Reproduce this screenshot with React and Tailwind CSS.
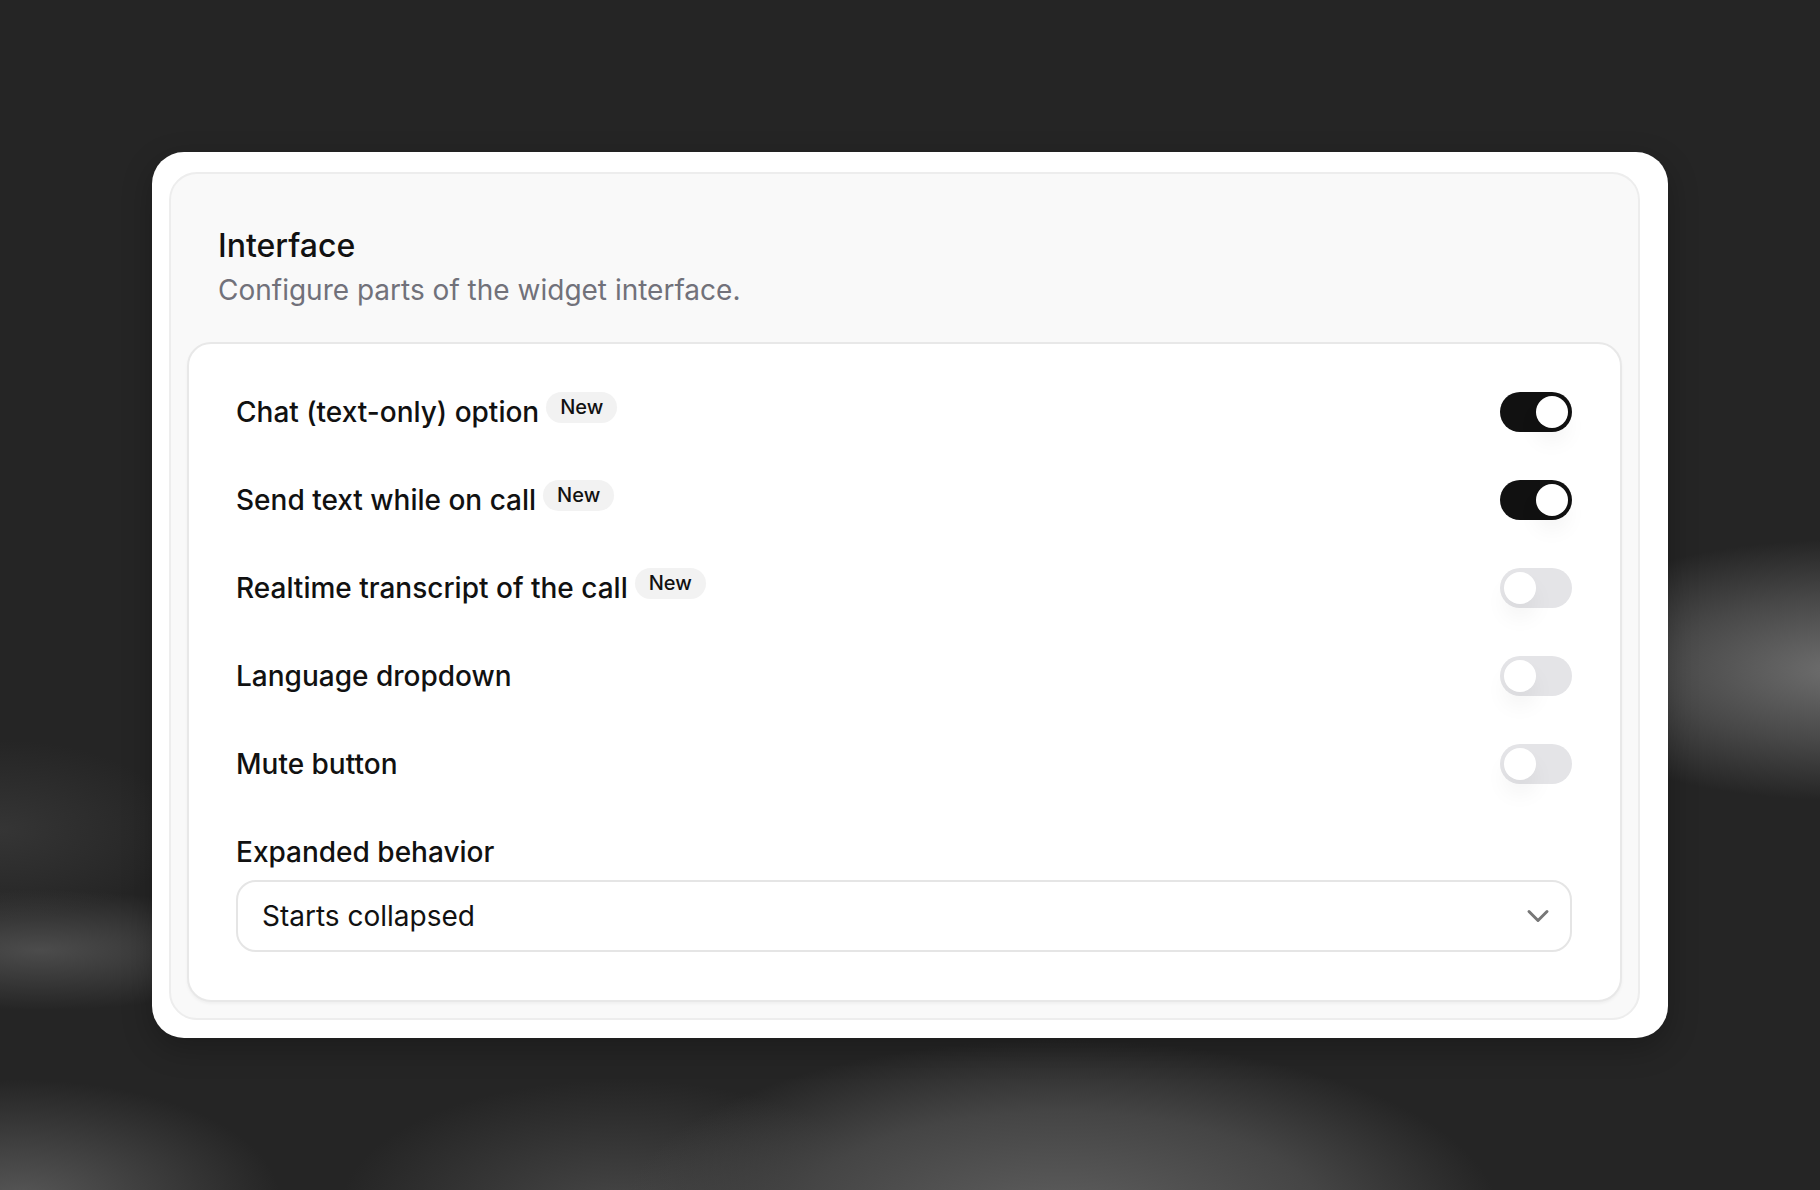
import { ChevronDown } from 'lucide-react';

const options = [
  { label: 'Chat (text-only) option', isNew: true, on: true },
  { label: 'Send text while on call', isNew: true, on: true },
  { label: 'Realtime transcript of the call', isNew: true, on: false },
  { label: 'Language dropdown', isNew: false, on: false },
  { label: 'Mute button', isNew: false, on: false },
];

function Toggle({ on }) {
  return (
    <button
      className={`w-[72px] h-[40px] shrink-0 rounded-full p-[4px] flex items-center ${on ? 'bg-[#111111] justify-end' : 'bg-[#e4e4e7] justify-start'}`}
    >
      <span className="w-8 h-8 rounded-full bg-white shadow-[0_14px_22px_rgba(0,0,0,0.05)]" />
    </button>
  );
}

export default function App() {
  return (
    <div className="w-full h-[1190px] overflow-hidden flex justify-center pt-[152px] bg-[#252525] bg-[radial-gradient(ellipse_320px_130px_at_1840px_670px,#6e6e6e,#484848_55%,transparent),radial-gradient(ellipse_240px_60px_at_40px_950px,#4c4c4c,transparent),radial-gradient(ellipse_180px_90px_at_0px_830px,#353535,transparent),radial-gradient(ellipse_260px_120px_at_20px_1200px,#575757,transparent),radial-gradient(ellipse_440px_180px_at_1060px_1220px,#5f5f5f,#454545_60%,transparent),radial-gradient(ellipse_280px_130px_at_620px_1210px,#474747,transparent)] font-['Inter',_sans-serif]">
      <div className="w-[1516px] h-fit bg-white rounded-[32px] pl-[17px] pr-[28px] pt-[20px] pb-[18px] shadow-[0_10px_30px_rgba(0,0,0,0.25)]">
        <div className="bg-[#f9f9f9] border-2 border-[#ededed] rounded-[28px] p-4">
          {/* Header */}
          <div className="pl-[31px] pr-8 pt-8 pb-8">
            <h2 className="text-[32px] leading-[48px] font-medium text-[#111111]">Interface</h2>
            <p className="text-[28px] leading-[40px] text-[#71717a]">Configure parts of the widget interface.</p>
          </div>

          {/* Settings */}
          <div className="bg-white border-2 border-[#e8e8e8] rounded-[24px] pl-[47px] pr-12 py-12 shadow-[0_2px_3px_rgba(0,0,0,0.04)]">
            <div className="flex flex-col gap-12">
              {options.map(o => (
                <div key={o.label} className="flex items-start justify-between">
                  <div className="flex items-start gap-[7px]">
                    <span className="text-[28px] leading-[40px] font-medium text-[#111111]">{o.label}</span>
                    {o.isNew && (
                      <span className="h-[31px] px-[14px] rounded-full bg-[#f2f2f2] text-[20px] leading-[31px] font-medium text-[#111111]">New</span>
                    )}
                  </div>
                  <Toggle on={o.on} />
                </div>
              ))}
            </div>

            <div className="mt-12">
              <div className="text-[28px] leading-[40px] font-medium text-[#111111]">Expanded behavior</div>
              <div className="mt-2 h-[72px] border-2 border-[#e5e5e5] rounded-[20px] flex items-center justify-between pl-[24px] pr-[14px]">
                <span className="text-[28px] text-[#111111]">Starts collapsed</span>
                <ChevronDown size={36} strokeWidth={2} className="text-[#777777]" />
              </div>
            </div>
          </div>
        </div>
      </div>
    </div>
  );
}
